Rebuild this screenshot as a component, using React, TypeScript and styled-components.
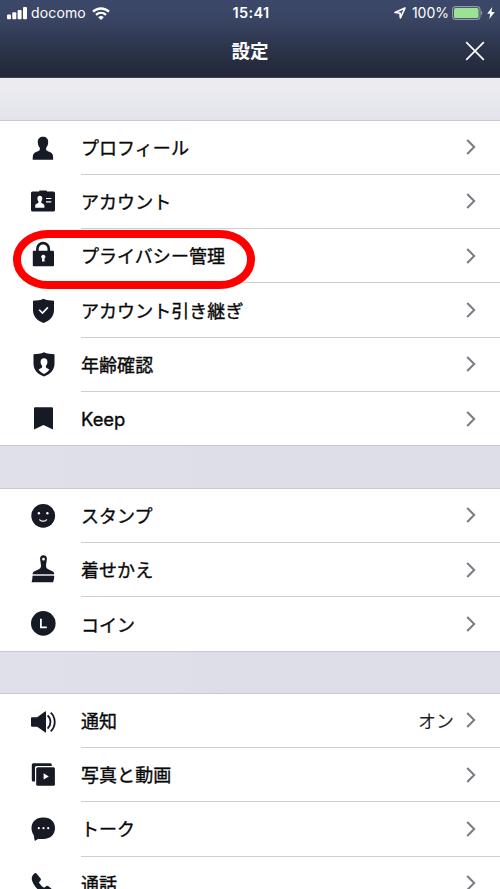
import React from "react";
import styled, { createGlobalStyle } from "styled-components";

const GlobalStyle = createGlobalStyle`
  body {
    margin: 0;
    overflow: hidden;
    background: #dddee8;
    font-family: "Liberation Sans", "Noto Sans CJK JP", sans-serif;
  }
`;

const INK = "#151a24";

const Screen = styled.div`
  position: relative;
  width: 500px;
  height: 889px;
  overflow: hidden;
  display: flex;
  flex-direction: column;
  background: #dddee8;
`;

const Header = styled.header`
  flex: none;
  height: 78px;
  box-sizing: border-box;
  display: flex;
  flex-direction: column;
  color: #fff;
  background: linear-gradient(#3c4869 0%, #394563 25%, #2c344b 63%, #212736 100%);
  border-bottom: 1px solid #3f4352;
`;

const StatusBar = styled.div`
  height: 26px;
  display: grid;
  grid-template-columns: 1fr auto 1fr;
  align-items: center;
  padding: 0 5px 0 7px;
  font-family: Inter, sans-serif;
  font-size: 14px;
  line-height: 26px;
`;

const StatusSide = styled.div<{ $end?: boolean }>`
  display: flex;
  align-items: center;
  height: 26px;
  justify-content: ${(p) => (p.$end ? "flex-end" : "flex-start")};
`;

const Carrier = styled.span`
  margin: 0 6px 0 4px;
  letter-spacing: 0.15px;
`;

const Clock = styled.span`
  font-weight: 600;
  font-size: 14.5px;
  letter-spacing: 0.35px;
`;

const Percent = styled.span`
  margin: 0 3px 0 6px;
`;

const Bolt = styled.svg`
  margin-left: 4px;
`;

const TitleBar = styled.div`
  height: 50px;
  display: grid;
  grid-template-columns: 1fr auto 1fr;
  align-items: center;
`;

const Title = styled.h1`
  grid-column: 2;
  margin: 0;
  font-family: "Noto Sans CJK JP", sans-serif;
  font-size: 18.5px;
  line-height: 48px;
  height: 50px;
  font-weight: 700;
`;

const CloseButton = styled.button`
  justify-self: end;
  margin-right: 15px;
  padding: 0;
  border: 0;
  background: none;
  width: 20px;
  height: 20px;
  color: #fff;
  svg { display: block; }
`;

const Gap = styled.div<{ $height: number; $top?: boolean }>`
  flex: none;
  height: ${(p) => p.$height}px;
  background: ${(p) =>
    p.$top ? "linear-gradient(#ededf1, #e3e4eb)" : "linear-gradient(90deg, #dfe0ea, #dddee8 50%)"};
`;

const Group = styled.section`
  flex: none;
  background: #fff;
  border-top: 1px solid #c8c8ce;
  border-bottom: 1px solid #c8c8ce;
`;

const Row = styled.div`
  height: 54.3px;
  display: flex;
  align-items: center;
  padding-left: 28px;
  &:last-child { height: 53.3px; }
`;

const IconSlot = styled.svg`
  flex: none;
  width: 30px;
  height: 30px;
  margin-right: 23px;
  overflow: visible;
  color: ${INK};
`;

const RowBody = styled.div`
  flex: 1;
  height: 100%;
  box-sizing: border-box;
  display: flex;
  align-items: center;
  padding-right: 24px;
  border-bottom: 1px solid #cfcfd3;
  ${Row}:last-child & { border-bottom: 0; }
`;

const Label = styled.span<{ $latin?: boolean }>`
  flex: 1;
  padding-bottom: ${(p) => (p.$latin ? 0 : 1)}px;
  color: #080808;
  font-family: ${(p) => (p.$latin ? "Inter, sans-serif" : '"Noto Sans CJK JP", sans-serif')};
  font-size: ${(p) => (p.$latin ? 18.4 : 18)}px;
  line-height: 26px;
  font-weight: 400;
  letter-spacing: ${(p) => (p.$latin ? 0 : 0.05)}px;
  -webkit-text-stroke: 0.35px #080808;
`;

const Value = styled.span`
  margin-right: 12px;
  padding-bottom: 1px;
  color: #222;
  font-family: "Noto Sans CJK JP", sans-serif;
  font-size: 18px;
  line-height: 26px;
`;

const Highlight = styled.div`
  position: absolute;
  left: 13px;
  top: 230px;
  width: 242px;
  height: 58.5px;
  box-sizing: border-box;
  border: 8px solid #fe0000;
  border-radius: 35px / 29.25px;
`;

const icons = {
  profile: (
    <path fill="currentColor" d="M15 3.7c3.2 0 5.2 2 5.2 5 0 2.7-.8 4.7-2.1 6v2c0 1 4.300 2.200 5.700 3.500 1.200 1.200 1.400 3.400 1.400 6.500H4.700c0-3.100.200-5.300 1.400-6.500 1.400-1.300 5.700-2.500 5.700-3.500v-2c-1.300-1.300-2-3.300-2-6 0-3 2-5 5.200-5z" />
  ),
  account: (
    <>
      <path fill="currentColor" d="M12 3.500h6q1 0 1 1.100h6.500q1.500 0 1.500 1.500v17q0 1.500-1.500 1.500h-21Q3 24.600 3 23.100v-17q0-1.500 1.500-1.500H11q0-1.100 1-1.100z" />
      <path fill="#fff" d="M11.900 8.800c1.500 0 2.400.9 2.400 2.500 0 1.300-.4 2.300-1 2.900v1.600c.4.700 3.100.9 3.100 3v2H7.200v-2c0-2.100 2.800-2.300 3.200-3v-1.600c-.6-.6-1-1.600-1-2.900 0-1.600 1-2.500 2.500-2.500z" />
      <path stroke="#fff" strokeWidth="1.200" d="M18 11.500h5.300M18 14.900h5.300" />
    </>
  ),
  lock: (
    <>
      <path fill="none" stroke="currentColor" strokeWidth="2.600" d="M9.400 11V7.800a5.700 5.700 0 0 1 11.400 0V11" />
      <rect x="4.800" y="9.700" width="21.200" height="15.600" rx="1" fill="currentColor" />
      <path fill="#fff" d="M15.300 13.800a2.100 2.100 0 0 1 1.100 3.900l.3 2.700h-2.800l.3-2.700a2.100 2.100 0 0 1 1.100-3.900z" />
    </>
  ),
  transfer: (
    <>
      <path fill="currentColor" d="M15.500 2.800c3 1.400 6.600 1.900 10.500 2v9.500c0 6.200-4.500 10.700-10.500 12.700C9.500 25 5 20.500 5 14.300V4.800c3.900-.1 7.500-.6 10.500-2z" />
      <path fill="none" stroke="#fff" strokeWidth="1.600" d="m11.200 13.800 3.300 3.200 5.400-5.600" />
    </>
  ),
  age: (
    <>
      <path fill="currentColor" d="M16 2.300c3 1.400 6.500 1.800 10.500 2v9.500c0 6.200-4.500 10.700-10.500 12.700C10 24.500 5.500 20 5.500 13.800V4.300c4-.2 7.500-.6 10.500-2z" />
      <path fill="#fff" d="M16 8.200c2.200 0 3.400 1.400 3.400 3.500 0 1.700-.5 3.100-1.500 4v1.500c0 .8 2.300 1.200 3.600 2.400-1.300 1.800-3.100 3.300-5.500 4.300-2.400-1-4.300-2.500-5.500-4.300 1.300-1.200 3.600-1.600 3.600-2.400v-1.500c-1-.9-1.500-2.300-1.500-4 0-2.100 1.200-3.500 3.400-3.500z" />
    </>
  ),
  keep: <path fill="currentColor" d="M7 3.300h16.700q1.300 0 1.300 1.300v21L15.500 20.900 6 25.600v-21q0-1.300 1-1.300z" />,
  sticker: (
    <>
      <circle cx="15.200" cy="14.800" r="11.900" fill="currentColor" />
      <circle cx="10.900" cy="12.200" r="1.200" fill="#fff" />
      <circle cx="19.400" cy="12.200" r="1.200" fill="#fff" />
      <path fill="none" stroke="#fff" strokeWidth="1.200" strokeLinecap="round" d="M11.700 18.800c1.800 1.900 5 1.900 6.800 0" />
    </>
  ),
  theme: (
    <>
      <path fill="currentColor" fillRule="evenodd" d="M15.500.3c2.300 0 3.600 1.600 3.400 3.800l-.9 6.500c-.1 2.300 1.100 3.400 3.200 4.200 3.300 1.300 5 2 5 4.300H4.600c0-2.300 2-3 5.200-4.300 2.100-.8 3.300-1.900 3.200-4.200l-.9-6.500c-.2-2.200 1.100-3.800 3.400-3.800zm0 2.500a1.400 1.400 0 1 0 0 2.800 1.400 1.400 0 0 0 0-2.800z" />
      <path fill="#b5b6bf" d="M4.600 19.100h21.600v2H4.500z" />
      <path fill="currentColor" d="M4.500 21.100h21.700c.1 2.200-.4 4.300-1.100 6.100H3.600c.6-1.800.9-3.900.9-6.100z" />
    </>
  ),
  coin: (
    <>
      <circle cx="15.300" cy="14.400" r="12.300" fill="currentColor" />
      <path fill="none" stroke="#fff" strokeWidth="1.800" d="M12.900 9.700v8.600h5.900" />
    </>
  ),
  sound: (
    <>
      <path fill="currentColor" d="M4 11.200h5.200L17 5.400q1-.4 1 .5v20q0 .9-1 .4l-7.800-5.500H4q-1 0-1-1v-7.600q0-1 1-1z" />
      <path fill="none" stroke="currentColor" strokeWidth="1.800" d="M19.600 9.300c3.800 3.700 3.800 9.700 0 13.400M22.700 6.700c5.400 5 5.400 13.500 0 18.600" />
    </>
  ),
  media: (
    <>
      <path fill="currentColor" d="M5.300 3.300h17q1.500 0 1.500 1.500v1.300H8.500Q7 6.100 7 7.600v14H5.300q-1.500 0-1.500-1.500V4.800q0-1.500 1.500-1.500z" />
      <rect x="8.200" y="7.200" width="18.700" height="18.500" rx="1.500" fill="currentColor" />
      <path fill="#fff" d="m15.600 13.200 5.200 3.200-5.200 3.200z" />
    </>
  ),
  talk: (
    <>
      <path fill="currentColor" d="M14.700 3.600h1.400c6.500 0 10.900 4.200 10.900 10.400 0 6.500-4.600 10.900-11.500 10.900H10l-2.800 1.900q-.4.100-.6-.5L5.700 21C4.300 19 3.500 16.700 3.500 14 3.500 7.800 8 3.600 14.700 3.600z" />
      <circle cx="10.800" cy="14.200" r="1.100" fill="#fff" />
      <circle cx="15.500" cy="14.200" r="1.100" fill="#fff" />
      <circle cx="20.200" cy="14.200" r="1.100" fill="#fff" />
    </>
  ),
  call: (
    <path fill="currentColor" d="m8.500 5.400 4.100 5.100q.7.900 0 1.800l-1.700 2.200c1.300 2.300 3 4 5.300 5.300l2.200-1.700q.9-.7 1.800 0l5.100 4.100q.9.900.2 1.900c-2 3-5.200 3.400-8.600 1.900C10.700 23 7 19.300 4.600 14 3 10.500 3.700 7.400 6.600 5.200q1-.7 1.900.2z" />
  ),
};

type Item = { icon: keyof typeof icons; label: string; value?: string; latin?: boolean };

const account: Item[] = [
  { icon: "profile", label: "プロフィール" },
  { icon: "account", label: "アカウント" },
  { icon: "lock", label: "プライバシー管理" },
  { icon: "transfer", label: "アカウント引き継ぎ" },
  { icon: "age", label: "年齢確認" },
  { icon: "keep", label: "Keep", latin: true },
];

const shop: Item[] = [
  { icon: "sticker", label: "スタンプ" },
  { icon: "theme", label: "着せかえ" },
  { icon: "coin", label: "コイン" },
];

const general: Item[] = [
  { icon: "sound", label: "通知", value: "オン" },
  { icon: "media", label: "写真と動画" },
  { icon: "talk", label: "トーク" },
  { icon: "call", label: "通話" },
];

const Chevron = () => (
  <svg width="10" height="16" viewBox="0 0 10 16" fill="none" stroke="#7b7b85" strokeWidth="2">
    <path d="m1.200 1 7 7-7 7" />
  </svg>
);

const SettingsGroup = ({ items }: { items: Item[] }) => (
  <Group>
    {items.map((item) => (
      <Row key={item.label}>
        <IconSlot viewBox="0 0 30 30">{icons[item.icon]}</IconSlot>
        <RowBody>
          <Label $latin={item.latin}>{item.label}</Label>
          {item.value && <Value>{item.value}</Value>}
          <Chevron />
        </RowBody>
      </Row>
    ))}
  </Group>
);

export default function App() {
  return (
    <Screen>
      <GlobalStyle />
      <Header>
        <StatusBar>
          <StatusSide>
            <svg width="20" height="13" viewBox="0 0 20 13" fill="#fff">
              <rect x="0" y="7.500" width="4" height="4.800" rx="1" />
              <rect x="5.300" y="5.300" width="4" height="7" rx="1" />
              <rect x="10.600" y="3" width="4" height="9.300" rx="1" />
              <rect x="16" y="0" width="4" height="12.300" rx="1" />
            </svg>
            <Carrier>docomo</Carrier>
            <svg width="18" height="13" viewBox="0 0 18 13" fill="none" stroke="#fff" strokeWidth="2.300">
              <path d="M1 4.700c4.500-4.300 11.500-4.300 16 0M4 7.900c2.900-2.700 7.100-2.700 10 0" />
              <path d="M6.200 10.200c1.700-1.500 3.900-1.500 5.600 0L9 13z" fill="#fff" stroke="none" />
            </svg>
          </StatusSide>
          <Clock>15:41</Clock>
          <StatusSide $end>
            <svg width="12" height="12" viewBox="0 0 12 12" fill="none" stroke="#fff" strokeWidth="1.700" strokeLinejoin="round">
              <path d="M11 1 1 5.500l5 .7.400 4.800z" />
            </svg>
            <Percent>100%</Percent>
            <svg width="31" height="14" viewBox="0 0 31 14">
              <rect x=".6" y=".6" width="27.400" height="12.800" rx="3" fill="none" stroke="#9297a8" strokeWidth="1.100" />
              <rect x="2" y="2" width="24.600" height="10" rx="1.600" fill="#9be394" />
              <path d="M29 4.800c1.700.5 1.700 3.900 0 4.400z" fill="#9297a8" />
            </svg>
            <Bolt width="8" height="12" viewBox="0 0 8 12">
              <path d="M5.200 0 .2 6.700h3L2.300 12 7.800 4.900H4.500z" fill="#fff" />
            </Bolt>
          </StatusSide>
        </StatusBar>
        <TitleBar>
          <Title>設定</Title>
          <CloseButton aria-label="閉じる">
            <svg width="20" height="20" viewBox="0 0 20 20" stroke="currentColor" strokeWidth="1.700">
              <path d="m1.200 1.200 17.600 17.600M18.800 1.200 1.200 18.800" />
            </svg>
          </CloseButton>
        </TitleBar>
      </Header>
      <Gap $height={41.5} $top />
      <SettingsGroup items={account} />
      <Gap $height={41.5} />
      <SettingsGroup items={shop} />
      <Gap $height={41} />
      <SettingsGroup items={general} />
      <Highlight />
    </Screen>
  );
}
